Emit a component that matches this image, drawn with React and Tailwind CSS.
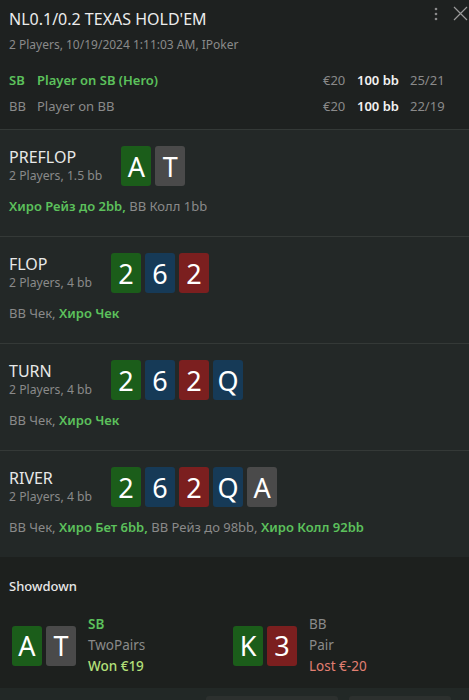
import React from "react";

const CARD_BG = {
  g: "bg-[#1b5d1a]",
  k: "bg-[#4a4a4a]",
  b: "bg-[#163a57]",
  r: "bg-[#7b1f1f]",
};

function Card({ v, c }) {
  return (
    <div
      className={`w-[30px] h-[40px] rounded-[3px] flex items-center justify-center text-[27px] leading-none text-white ${CARD_BG[c]}`}
    >
      {v}
    </div>
  );
}

function Cards({ cards }) {
  return (
    <div className="flex gap-[4px]">
      {cards.map((x, i) => (
        <Card key={i} v={x[0]} c={x[1]} />
      ))}
    </div>
  );
}

const G = ({ children }) => (
  <span className="text-[#5cc15c] font-semibold">{children}</span>
);
const N = ({ children }) => <span className="text-[#8a8a8a]">{children}</span>;

function Street({ name, sub, cards, actions }) {
  return (
    <div className="border-t border-[#343937] bg-[#232827] h-[107px] px-[9px] pt-[16px]">
      <div className="flex items-center gap-[19px]">
        <div className="flex flex-col">
          <div className="text-[16px] leading-[20px] text-[#e8e8e8]">{name}</div>
          <div className="text-[12.2px] leading-[18px] text-[#8a8a8a]">{sub}</div>
        </div>
        <Cards cards={cards} />
      </div>
      <div className="mt-[11px] text-[13px] leading-[18px]">{actions}</div>
    </div>
  );
}

function Row({ hero, pos, name, stack, bb, stat }) {
  const c = hero ? "text-[#5cc15c] font-semibold" : "text-[#8a8a8a]";
  return (
    <div className="flex items-center text-[13px] leading-[20px]">
      <span className={`w-[28px] ${c}`}>{pos}</span>
      <span className={c}>{name}</span>
      <span className="ml-auto w-[34px] text-[#8a8a8a]">{stack}</span>
      <span className="w-[53px] text-[#f2f2f2] font-semibold">{bb}</span>
      <span className="w-[59px] text-[#8a8a8a]">{stat}</span>
    </div>
  );
}

export default function App() {
  return (
    <div
      className="w-[469px] h-[700px] overflow-hidden bg-[#1e2120] flex flex-col"
      style={{ fontFamily: '"Noto Sans", "Open Sans", sans-serif' }}
    >
      {/* Header */}
      <div className="relative h-[129px] pl-[9px] pt-[7px]">
        <div className="text-[16px] leading-[24px] text-[#ececec]">
          NL0.1/0.2 TEXAS HOLD'EM
        </div>
        <div className="mt-[4px] text-[12px] leading-[20px] text-[#8a8a8a]">
          2 Players, 10/19/2024 1:11:03 AM, IPoker
        </div>
        <div className="mt-[15px]">
          <Row hero pos="SB" name="Player on SB (Hero)" stack="€20" bb="100 bb" stat="25/21" />
        </div>
        <div className="mt-[6px]">
          <Row pos="BB" name="Player on BB" stack="€20" bb="100 bb" stat="22/19" />
        </div>
        <div className="absolute right-0 top-[5px] flex items-center gap-[14px]">
          <svg width="4" height="14" viewBox="0 0 4 14" className="text-[#8a8a8a]">
            <circle cx="2" cy="2" r="1.3" fill="currentColor" />
            <circle cx="2" cy="7" r="1.3" fill="currentColor" />
            <circle cx="2" cy="12" r="1.3" fill="currentColor" />
          </svg>
          <svg width="17" height="17" viewBox="0 0 17 17" className="text-[#9a9a9a]">
            <path d="M2 2 L15 15 M15 2 L2 15" stroke="currentColor" strokeWidth="1.2" />
          </svg>
        </div>
      </div>

      <Street
        name="PREFLOP"
        sub="2 Players, 1.5 bb"
        cards={[["A", "g"], ["T", "k"]]}
        actions={
          <>
            <G>Хиро Рейз до 2bb,</G> <N>BB Колл 1bb</N>
          </>
        }
      />
      <Street
        name="FLOP"
        sub="2 Players, 4 bb"
        cards={[["2", "g"], ["6", "b"], ["2", "r"]]}
        actions={
          <>
            <N>BB Чек,</N> <G>Хиро Чек</G>
          </>
        }
      />
      <Street
        name="TURN"
        sub="2 Players, 4 bb"
        cards={[["2", "g"], ["6", "b"], ["2", "r"], ["Q", "b"]]}
        actions={
          <>
            <N>BB Чек,</N> <G>Хиро Чек</G>
          </>
        }
      />
      <Street
        name="RIVER"
        sub="2 Players, 4 bb"
        cards={[["2", "g"], ["6", "b"], ["2", "r"], ["Q", "b"], ["A", "k"]]}
        actions={
          <>
            <N>BB Чек,</N> <G>Хиро Бет 6bb,</G> <N>BB Рейз до 98bb,</N>{" "}
            <G>Хиро Колл 92bb</G>
          </>
        }
      />

      {/* Showdown */}
      <div className="bg-[#1d201e] h-[131px] pl-[9px] pt-[19px]">
        <div className="text-[13px] leading-[20px] text-[#e8e8e8] font-medium">
          Showdown
        </div>
        <div className="mt-[18px] grid grid-cols-[221px_1fr] pl-[3px]">
          <div className="flex items-center gap-[12px]">
            <Cards cards={[["A", "g"], ["T", "k"]]} />
            <div className="flex flex-col text-[13.5px] leading-[21px]">
              <span className="text-[#5cc15c] font-semibold">SB</span>
              <span className="text-[#8a8a8a]">TwoPairs</span>
              <span className="text-[#b4e07a] font-medium">Won €19</span>
            </div>
          </div>
          <div className="flex items-center gap-[12px]">
            <Cards cards={[["K", "g"], ["3", "r"]]} />
            <div className="flex flex-col text-[13.5px] leading-[21px]">
              <span className="text-[#8a8a8a]">BB</span>
              <span className="text-[#8a8a8a]">Pair</span>
              <span className="text-[#e27f72]">Lost €-20</span>
            </div>
          </div>
        </div>
      </div>
      <div className="flex-1 bg-[#222826] relative">
        <div className="absolute left-[206px] top-[8px] w-[132px] h-[10px] rounded-[3px] bg-[#2c302e]" />
        <div className="absolute left-[349px] top-[8px] w-[102px] h-[10px] rounded-[3px] bg-[#2c302e]" />
      </div>
    </div>
  );
}
